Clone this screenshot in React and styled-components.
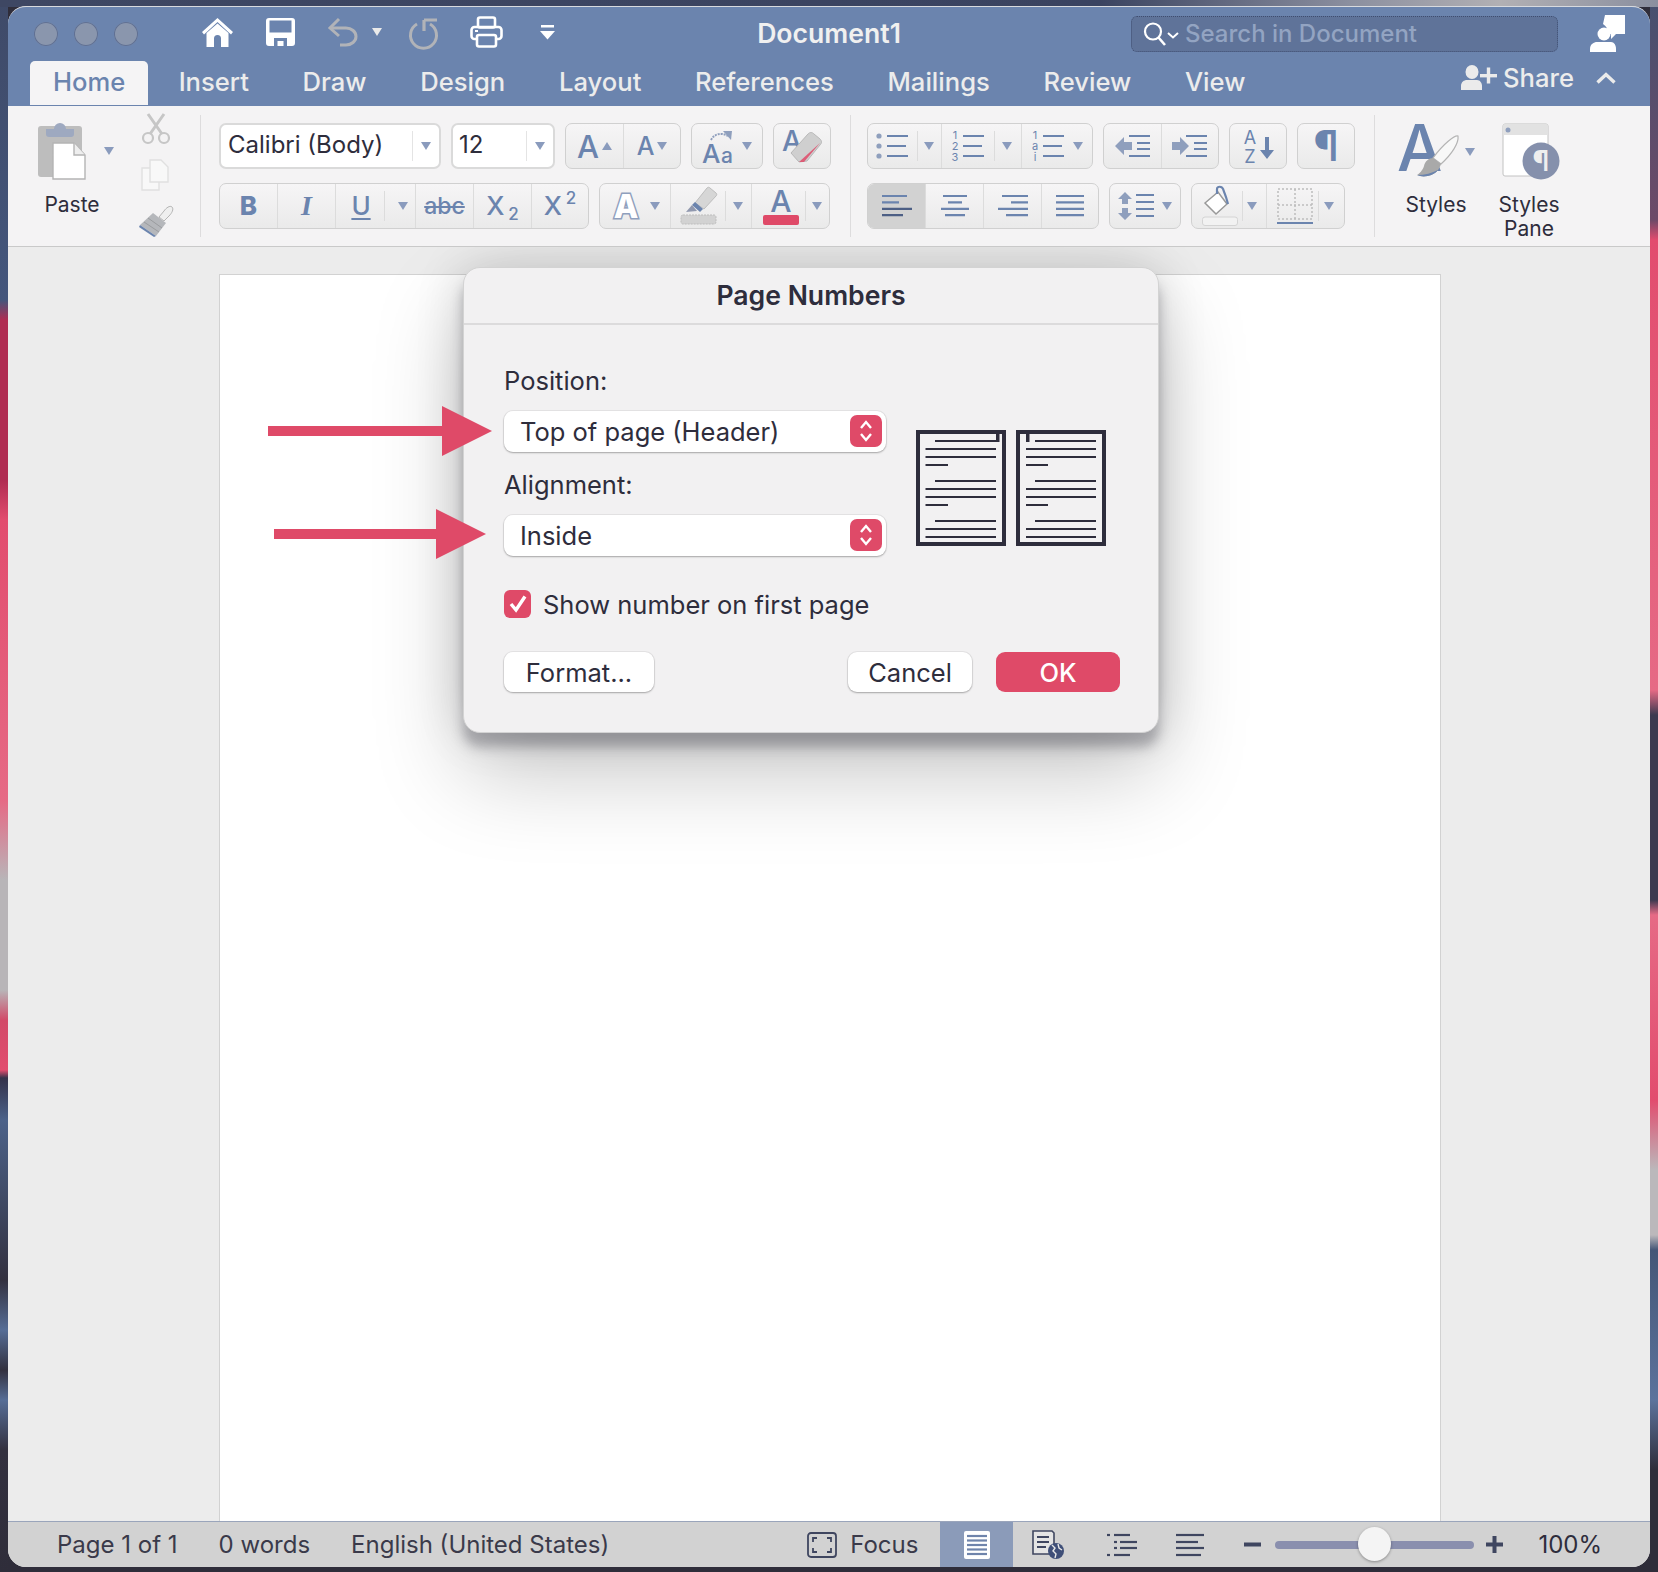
import React from 'react';
import styled, { createGlobalStyle } from 'styled-components';

const BLUE = '#6b84ae';
const RED = '#df4a68';
const INK = '#2e2d3c';

const Global = createGlobalStyle`
  html, body { margin: 0; padding: 0; }
  svg { overflow: visible; }
  body {
    width: 1658px; height: 1572px; overflow: hidden;
    font-family: Inter, "Noto Sans", "Liberation Sans", sans-serif;
    background-color: #2f2d3a;
    background-repeat: no-repeat;
    background-image:
      linear-gradient(to right, #3e4763 0, #3a4360 1100px, #8b8f9f 1350px, #b2b0b4 1500px, #8a8f9f 100%),
      linear-gradient(to bottom, #3f4a68 0, #44567c 300px, #b02c52 320px, #b02c52 480px, #e24c6e 520px, #e66a85 800px, #b8b5b8 880px, #b8b5b8 990px, #d24a68 1020px, #e24c6e 1070px, #34324a 1078px, #4c6289 1120px, #33313f 1280px, #566d96 1330px, #33313f 1370px, #566d96 1400px, #33313f 1450px, #2f2d3a 100%),
      linear-gradient(to bottom, #46506f 0, #6d4a68 220px, #e24c6e 240px, #e66a85 690px, #3c3a50 715px, #3c3a50 900px, #e66a85 915px, #e24c6e 1100px, #bbb8bb 1170px, #bbb8bb 1235px, #445677 1250px, #5c739c 1400px, #2f2d3a 1470px, #2f2d3a 100%);
    background-size: 100% 7px, 8px 100%, 8px 100%;
    background-position: 0 0, 0 0, 100% 0;
  }
`;

const Stage = styled.div`
  box-sizing: border-box;
  width: 1658px; height: 1572px;
  padding: 6px 8px 5px;
`;
const Win = styled.div`
  display: flex; flex-direction: column;
  height: 100%;
  border-radius: 18px;
  overflow: hidden;
  background: #ececec;
  border-top: 1px solid #d8dade;
  box-sizing: border-box;
`;

/* ---------- title ---------- */
const Head = styled.header`
  background: ${BLUE};
  height: 99px;
  flex: none;
`;
const TopRow = styled.div`
  display: grid;
  grid-template-columns: 1fr auto 1fr;
  align-items: center;
  height: 53px;
`;
const TopLeft = styled.div`
  display: flex; align-items: center;
  padding-left: 26px;
`;
const Lights = styled.div`
  display: flex; gap: 16px;
  margin-right: 64px;
`;
const Light = styled.span`
  width: 24px; height: 24px; border-radius: 50%;
  background: #8a96ad;
  box-shadow: inset 0 0 0 1px #5f7094;
`;
const QatBtn = styled.span`
  display: inline-flex; align-items: center; justify-content: center;
  margin-right: ${p => p.$mr ?? 0}px;
  margin-top: -3px;
`;
const DocTitle = styled.div`
  font-size: 26.6px; font-weight: 600;
  color: #f0f0f0;
  margin-top: -2px;
`;
const TopRight = styled.div`
  display: flex; align-items: center; justify-content: flex-end;
  gap: 32px;
  padding-right: 25px;
`;
const Search = styled.div`
  display: flex; align-items: center;
  box-sizing: border-box;
  width: 427px; height: 36px;
  padding-left: 11px;
  background: #5f7399;
  border: 1px dotted #3f4d70;
  border-radius: 6px;
`;
const SearchText = styled.span`
  margin-left: 6px;
  font-size: 24px; font-weight: 500;
  color: #93a4c2;
`;
const TabRow = styled.nav`
  display: flex; align-items: flex-end;
  height: 45px;
  padding: 0 34px 0 22px;
`;
const Tab = styled.div`
  height: 44px; display: flex; align-items: center;
  padding: 0 ${p => (p.$active ? 23 : 26.85)}px 4px;
  margin-right: ${p => (p.$active ? 3.5 : 0)}px;
  box-sizing: border-box;
  font-size: 25.6px; font-weight: 500;
  color: ${p => (p.$active ? BLUE : '#ececec')};
  background: ${p => (p.$active ? '#f5f4f5' : 'transparent')};
  border-radius: 5px 5px 0 0;
`;
const ShareBox = styled.div`
  margin-left: auto;
  align-self: center;
  display: flex; align-items: center;
  color: #ececec;
  font-size: 25.6px; font-weight: 500;
  margin-top: -10px;
`;
const ShareText = styled.span`
  margin: 0 22px 0 6px;
`;

/* ---------- ribbon ---------- */
const Ribbon = styled.section`
  display: flex; flex: none;
  height: 141px;
  box-sizing: border-box;
  background: #f4f3f4;
  border-bottom: 1px solid #c9c9c9;
`;
const Sep = styled.div`
  flex: none;
  width: 1px; height: 122px;
  margin: 9px ${p => p.$r}px 0 ${p => p.$l}px;
  background: #dddcdd;
`;
const ClipGroup = styled.div`
  display: flex;
  width: 192px; flex: none;
`;
const PasteCol = styled.div`
  display: flex; flex-direction: column;
  width: 130px;
  padding: 14px 0 0 30px;
  box-sizing: border-box;
`;
const PasteTop = styled.div`
  display: flex; align-items: center; gap: 18px;
  height: 62px;
`;
const RibbonLabel = styled.div`
  font-size: 21px;
  line-height: 24px;
  color: ${INK};
  text-align: center;
`;
const PasteLabel = styled(RibbonLabel)`
  width: 68px;
  margin-top: 11px;
`;
const MiniCol = styled.div`
  display: flex; flex-direction: column; gap: 14px;
  padding: 7px 0 0 3px;
`;
const RowsBlock = styled.div`
  display: flex; flex-direction: column; gap: 14px;
  padding-top: 17px;
  width: ${p => p.$w}px; flex: none;
`;
const Row = styled.div`
  display: flex; gap: 10px; height: 46px;
`;
const Field = styled.div`
  display: flex; align-items: center;
  box-sizing: border-box;
  width: ${p => p.$w}px;
  padding-left: ${p => p.$pl ?? 7}px;
  background: #fff;
  border: 2px solid #dadada;
  border-radius: 7px;
  font-size: 24px;
  color: ${INK};
`;
const FieldText = styled.span` flex: 1; margin-top: -4px; `;
const FieldDrop = styled.span`
  display: flex; align-items: center; justify-content: center;
  width: 26px; height: 30px;
  border-left: 1px solid #e4e4e4;
`;
const Tools = styled.div`
  display: flex;
  box-sizing: border-box;
  border: 1.5px solid #d0d0d0;
  border-radius: 7px;
  background: linear-gradient(to bottom, #f6f5f6, #eaeaea);
`;
const Cell = styled.div`
  display: flex; align-items: center; justify-content: center;
  gap: ${p => p.$gap ?? 6}px;
  width: ${p => p.$w}px;
  padding-left: ${p => p.$pl ?? 0}px;
  box-sizing: border-box;
  flex: none;
  border-right: 1.5px solid #dcdcdc;
  background: ${p => (p.$on ? '#d2d2d2' : 'transparent')};
  border-radius: ${p => (p.$on ? '6px 0 0 6px' : '0')};
  &:last-child { border-right: 0; }
`;
const Caret = styled.span`
  display: inline-block; width: 0; height: 0; flex: none;
  border-left: 5px solid transparent;
  border-right: 5px solid transparent;
  border-top: 8px solid ${p => p.$c || '#8a9bbd'};
`;
const CaretUp = styled(Caret)`
  border-top: 0;
  border-bottom: 8px solid #8a9bbd;
`;
const Split = styled.span`
  width: 1px; height: 30px; background: #dcdcdc; flex: none;
`;
const Glyph = styled.span`
  font-size: ${p => p.$s || 26}px;
  font-weight: ${p => p.$w || 500};
  font-style: ${p => (p.$i ? 'italic' : 'normal')};
  font-family: ${p => (p.$serif ? '"Liberation Serif", serif' : 'inherit')};
  color: ${BLUE};
  line-height: 1;
  text-decoration: ${p => p.$d || 'none'};
  text-decoration-thickness: 2px;
  text-underline-offset: 3px;
`;
const Sub = styled.span`
  font-size: 17px; font-weight: 500; color: ${BLUE};
  position: relative; top: ${p => p.$t}px;
  margin-left: 4px;
`;
const StyleCols = styled.div`
  display: flex; flex: none;
  padding: 15px 0 0 23px;
  gap: 17px;
`;
const StyleCol = styled.div`
  display: flex; flex-direction: column; align-items: center;
  width: ${p => p.$w}px;
`;
const StyleIcon = styled.div`
  display: flex; align-items: center; gap: 5px;
  height: 62px; margin-bottom: 10px;
  align-self: ${p => p.$start ? 'flex-start' : 'center'};
`;

/* ---------- content ---------- */
const Content = styled.main`
  position: relative;
  flex: 1; min-height: 0;
  overflow: hidden;
  background: #ececec;
  padding: 27px 0 0 211px;
  box-sizing: border-box;
`;
const Page = styled.div`
  box-sizing: border-box;
  width: 1222px; height: 100%;
  background: #fff;
  border: 1px solid #d2d2d2;
  border-bottom: 0;
`;
const Dialog = styled.div`
  position: absolute;
  left: 455px; top: 20px;
  width: 696px; height: 466px;
  box-sizing: border-box;
  background: #f2f1f2;
  border: 1px solid #d3d3d3;
  border-radius: 17px;
  box-shadow: 0 14px 12px rgba(60,60,70,.34), 0 40px 90px rgba(0,0,0,.22), 0 0 50px rgba(0,0,0,.14);
  color: ${INK};
`;
const DialogHead = styled.div`
  display: flex; align-items: center; justify-content: center;
  height: 57px;
  border-bottom: 2px solid #dcdbdc;
  box-sizing: border-box;
  font-size: 26.6px; font-weight: 600;
  padding-bottom: 2px;
`;
const DialogBody = styled.div`
  padding: 40px 38px 0 40px;
`;
const FormGrid = styled.div`
  display: grid;
  grid-template-columns: 382px auto;
  column-gap: 30px;
`;
const FieldLabel = styled.div`
  font-size: 25.5px; line-height: 32px;
  margin-bottom: 14px;
`;
const SelectBox = styled.div`
  display: flex; align-items: center; justify-content: space-between;
  box-sizing: border-box;
  height: 41px;
  padding: 0 4px 1px 16px;
  background: #fff;
  border-radius: 9px;
  box-shadow: 0 1px 2px rgba(0,0,0,.28), 0 0 0 1px rgba(0,0,0,.05);
  font-size: 25.5px;
  margin-bottom: ${p => p.$mb ?? 0}px;
`;
const Stepper = styled.span`
  display: flex; align-items: center; justify-content: center;
  width: 32px; height: 32px;
  border-radius: 7px;
  background: ${RED};
`;
const Preview = styled.div`
  display: flex; gap: 10px;
  padding-top: 65px;
`;
const CheckRow = styled.label`
  display: flex; align-items: center; gap: 12px;
  margin-top: 34px;
  height: 28px;
  font-size: 25.5px;
`;
const CheckMark = styled.span`
  display: flex; align-items: center; justify-content: center;
  width: 27px; height: 28px;
  border-radius: 6px;
  background: ${RED};
`;
const Footer = styled.div`
  display: flex; align-items: center;
  margin-top: 34px;
`;
const DlgButton = styled.button`
  height: 40px; width: ${p => p.$w}px;
  margin-left: ${p => p.$ml || 0};
  font: inherit;
  font-size: 25.5px;
  font-weight: ${p => (p.$primary ? 500 : 400)};
  color: ${p => (p.$primary ? '#fff' : INK)};
  background: ${p => (p.$primary ? RED : '#fff')};
  border: 0; border-radius: 9px;
  padding: 0;
  box-shadow: ${p => (p.$primary ? 'none' : '0 1px 2px rgba(0,0,0,.28), 0 0 0 1px rgba(0,0,0,.05)')};
`;
const ArrowMark = styled.svg`
  position: absolute;
  left: ${p => p.$x}px; top: ${p => p.$y}px;
`;

/* ---------- status ---------- */
const Status = styled.footer`
  display: flex; align-items: center; flex: none;
  height: 46px;
  box-sizing: border-box;
  padding-left: 49px;
  background: #d2d2d2;
  border-top: 1.5px solid #9aa5bb;
  font-size: 24px;
  color: #3a3a4a;
`;
const StatusText = styled.span`
  margin-right: ${p => p.$mr ?? 41}px;
`;
const ViewCell = styled.div`
  display: flex; align-items: center;
  justify-content: ${p => (p.$end ? 'flex-end' : 'center')};
  align-self: stretch;
  width: ${p => p.$w}px; flex: none;
  background: ${p => (p.$on ? '#8b9bb9' : 'transparent')};
`;
const FocusBox = styled.div`
  display: flex; align-items: center; gap: 13px;
  margin-left: auto;
  margin-right: 22px;
`;
const Zoomer = styled.div`
  position: relative;
  width: 199px; height: 8px;
  border-radius: 4px;
  background: #8a8fae;
  margin: 0 12px 0 14px;
`;
const Thumb = styled.span`
  position: absolute;
  left: 83px; top: -14px;
  width: 33px; height: 34px;
  border-radius: 50%;
  background: #f4f4f4;
  box-shadow: 0 1px 3px rgba(0,0,0,.35);
`;
const Pct = styled.span`
  margin: 0 48px 0 35px;
  color: ${INK};
`;

/* ---------- icons ---------- */
const L = ({ y, a, b, c = BLUE, w = 2.2 }) => <line x1={a} x2={b} y1={y} y2={y} stroke={c} strokeWidth={w} />;

const HomeIcon = () => (
  <svg width="31" height="31" viewBox="0 0 31 31">
    <path d="M15.5 1 L31 15 l-2 2.4 L15.5 5 2 17.4 0 15z" fill="#fff" />
    <path d="M4.5 16 15.5 6.5 26.5 16v14h-7.5v-8.5a3.5 3.5 0 0 0-7 0V30H4.500z" fill="#fff" />
  </svg>
);
const SaveIcon = () => (
  <svg width="29" height="28" viewBox="0 0 29 28">
    <path fillRule="evenodd" fill="#fff" d="M3 0h23a3 3 0 0 1 3 3v22a3 3 0 0 1-3 3H3a3 3 0 0 1-3-3V3a3 3 0 0 1 3-3zM3.500 2.500v12h22v-12z" />
    <path d="M8 28v-8h13v8h-3.500v-5h-6v5z" fill="#6b84ae" />
  </svg>
);
const UndoIcon = () => (
  <svg width="31" height="30" viewBox="0 0 31 30" fill="none" stroke="#b1b3b8" strokeWidth="3">
    <path d="M11 2 2 11l9 8" />
    <path d="M3 11h15a10 8.500 0 0 1 0 17h-6" />
  </svg>
);
const RedoIcon = () => (
  <svg width="31" height="31" viewBox="0 0 31 31" fill="none" stroke="#b1b3b8" strokeWidth="3.2">
    <path d="M16 3h13M16 3v11" />
    <path d="M9 7a13 13 0 1 0 13 0" strokeWidth="3" />
  </svg>
);
const PrintIcon = () => (
  <svg width="33" height="32" viewBox="0 0 33 32" fill="none" stroke="#fff" strokeWidth="2.6">
    <rect x="8" y="1.500" width="17" height="10" rx="2" />
    <path d="M7 23H4.500A3 3 0 0 1 1.500 20v-6a3 3 0 0 1 3-3h24a3 3 0 0 1 3 3v6a3 3 0 0 1-3 3H26" />
    <rect x="7" y="19" width="19" height="11.500" rx="2" />
    <rect x="5" y="14" width="3" height="2" fill="#fff" stroke="none" />
  </svg>
);
const CustomizeIcon = () => (
  <svg width="15" height="15" viewBox="0 0 15 15" fill="#fff">
    <rect x="1" y="0" width="13" height="2.500" />
    <path d="M0 6h15l-7.500 8.500z" />
  </svg>
);
const SearchIcon = () => (
  <svg width="36" height="24" viewBox="0 0 36 24" fill="none" stroke="#fff">
    <circle cx="10" cy="9.500" r="8" strokeWidth="2.200" />
    <path d="M15.500 15.500 22 23" strokeWidth="2.600" />
    <path d="M25 11l5 4.500 5-4.500" strokeWidth="2" />
  </svg>
);
const PersonChat = () => (
  <svg width="35" height="37" viewBox="0 0 35 37" fill="#fff">
    <path d="M15 0h20v19H26l-5 5v-5h-3A11 11 0 0 0 13 9z" />
    <circle cx="14" cy="19" r="6.500" />
    <path d="M0 37v-3c0-5 4-7 7-7h14c3 0 5 3 5 7v3z" />
  </svg>
);
const SharePerson = () => (
  <svg width="36" height="25" viewBox="0 0 36 25" fill="#ebebeb">
    <ellipse cx="11" cy="7" rx="6.500" ry="7" />
    <path d="M0 25v-4c0-4 3-6 6-6h10c3 0 5 3 5 6v4z" />
    <rect x="19" y="9" width="17" height="3.400" />
    <rect x="25.800" y="2.500" width="3.400" height="16" />
  </svg>
);
const CollapseIcon = () => (
  <svg width="20" height="12" viewBox="0 0 20 12" fill="none" stroke="#ebebeb" strokeWidth="3.400">
    <path d="M1.500 10.500 10 2.500l8.500 8" />
  </svg>
);
const PasteIcon = () => (
  <svg width="48" height="60" viewBox="0 0 48 60">
    <rect x="0" y="5" width="44" height="51" rx="3" fill="#bdbdbd" />
    <path d="M8 8h8a6 6 0 0 1 12 0h8v5a3 3 0 0 1-3 3H11a3 3 0 0 1-3-3z" fill="#9ea9c0" />
    <path d="M15 22h21l11 12v24H15z" fill="#fff" stroke="#b4b4b4" strokeWidth="1.400" />
    <path d="M36 22v12h11" fill="#eee" stroke="#b4b4b4" strokeWidth="1.400" />
  </svg>
);
const ScissorsIcon = () => (
  <svg width="30" height="32" viewBox="0 0 30 32" fill="none" stroke="#c6c6c6" strokeWidth="2.200">
    <circle cx="7" cy="25" r="5" />
    <circle cx="23" cy="25" r="5" />
    <path d="M9 21 23 1M21 21 7 1" strokeWidth="3" />
  </svg>
);
const CopyIcon = () => (
  <svg width="28" height="32" viewBox="0 0 28 32" fill="#f8f8f8" stroke="#e0e0e0" strokeWidth="1.400">
    <path d="M1 9h17v22H1z" />
    <path d="M9 1h11l7 7v15H9z" />
  </svg>
);
const BrushIcon = () => (
  <svg width="34" height="32" viewBox="2 0 34 32">
    <path d="M20 12 25 6c2-3 6-6 8-4s0 6-3 9l-5 5z" fill="#efefef" stroke="#b5b5b5" />
    <path d="M14 8 27 18 17 31 1 20z" fill="#b5b7bb" />
    <path d="M1 20 17 31 15 32 0 22z" fill={BLUE} />
    <path d="M5 17 20 27M9 13 23 23" stroke="#9a9c9f" strokeWidth="1" />
  </svg>
);
const TextEffect = () => (
  <svg width="32" height="32" viewBox="0 0 32 32">
    <text x="16" y="28" textAnchor="middle" fontFamily="Inter" fontWeight="800" fontSize="32" fill="#fff" stroke="#8f9fbd" strokeWidth="3" paintOrder="stroke">A</text>
  </svg>
);
const Highlighter = () => (
  <svg width="38" height="40" viewBox="0 0 38 40">
    <path d="M15 17 27 2c1-1 2-1 3 0l6 5c1 1 1 2 0 3L24 23z" fill="#d6d6d6" stroke="#bdbdbd" />
    <path d="M12 19l3-3 8 7-3 3z" fill={BLUE} />
    <path d="M6 26l6-7 5 6z" fill="#9098ae" />
    <rect x="1" y="29" width="35" height="9" rx="2" fill="#d2d2d2" stroke="#bdbdbd" strokeDasharray="2 1" />
  </svg>
);
const FontColor = () => (
  <svg width="36" height="38" viewBox="0 0 36 38">
    <text x="18" y="25" textAnchor="middle" fontFamily="Inter" fontWeight="500" fontSize="30" fill={BLUE}>A</text>
    <rect y="28" width="36" height="10" rx="2" fill={RED} />
  </svg>
);
const ChangeCase = () => (
  <svg width="34" height="36" viewBox="0 0 34 36">
    <text x="0" y="35" fontFamily="Inter" fontWeight="500" fontSize="26" fill={BLUE}>A</text>
    <text x="19" y="35" fontFamily="Inter" fontWeight="500" fontSize="21" fill={BLUE}>a</text>
    <path d="M9 12C12 6 19 4 26 8" fill="none" stroke="#8f9fbd" strokeWidth="2" strokeDasharray="2 1" />
    <path d="M21 3l9 0-1 9z" fill="#8f9fbd" />
  </svg>
);
const ClearFormat = () => (
  <svg width="40" height="36" viewBox="0 0 40 36">
    <text x="0" y="23" fontFamily="Inter" fontWeight="500" fontSize="28" fill={BLUE}>A</text>
    <path d="M9 25 26 6c2-2 4-2 6 0l6 5c2 2 2 4 0 6L25 33l-8 1z" fill="#cfcfcf" stroke="#b8b8b8" />
    <path d="M38 15 22 34l-5 0z" fill={RED} opacity="0.85" />
  </svg>
);
const AlignIcon = ({ rows }) => (
  <svg width="32" height="26" viewBox="0 0 32 26">
    {rows.map((r, i) => <L key={i} y={3 + i * 6.400} a={r[0]} b={r[1]} c={r[2] || BLUE} />)}
  </svg>
);
const ListLines = ({ marks, x = 12 }) => (
  <svg width="36" height="30" viewBox="0 0 36 30">
    {marks.map((m, i) => {
      const y = 4 + i * 11;
      return m === '•'
        ? <circle key={i} cx="4" cy={y + 1 - i} r="2.600" fill="#8f9fbd" />
        : <text key={i} x="4" y={y + 4} textAnchor="middle" fontFamily="Inter" fontSize="11" fill={BLUE}>{m}</text>;
    })}
    <L y={5} a={x} b={33} /><L y={15} a={x} b={31} /><L y={25} a={x} b={33} />
  </svg>
);
const IndentIcon = ({ flip }) => (
  <svg width="36" height="26" viewBox="0 0 36 26">
    <path d={flip ? 'M0 9h8V4l9 9-9 9v-5H0z' : 'M0 13l9-9v5h8v8H9v5z'} fill="#8f9fbd" />
    <L y={3} a={14} b={35} /><L y={10} a={22} b={35} /><L y={16} a={22} b={35} /><L y={23} a={14} b={35} />
  </svg>
);
const SortIcon = () => (
  <svg width="32" height="36" viewBox="0 0 32 36">
    <text x="8" y="16" textAnchor="middle" fontFamily="Inter" fontSize="18" fill={BLUE}>A</text>
    <text x="8" y="35" textAnchor="middle" fontFamily="Inter" fontSize="18" fill={BLUE}>Z</text>
    <path d="M23 9h4v13h5l-7 9-7-9h5z" fill={BLUE} />
  </svg>
);
const SpacingIcon = () => (
  <svg width="38" height="28" viewBox="0 0 38 28">
    <path d="M7 0l7 7h-4v5H4V7H0zM7 28l7-7h-4v-5H4v5H0z" fill="#8f9fbd" />
    <L y={3} a={18} b={36} /><L y={10} a={18} b={36} /><L y={17} a={18} b={36} /><L y={24} a={18} b={36} />
  </svg>
);
const Bucket = () => (
  <svg width="36" height="40" viewBox="0 0 36 40">
    <path d="M3 17 16 6l9 12-11 10z" fill="#fff" stroke="#999" strokeWidth="1.500" />
    <path d="M15 8V3c0-3 5-3 6 0l3 8 2 7" fill="none" stroke={BLUE} strokeWidth="2.200" />
    <rect x="0.500" y="31" width="35" height="8.500" rx="2.500" fill="#f2f2f2" stroke="#d4d4d4" />
  </svg>
);
const Borders = () => (
  <svg width="36" height="36" viewBox="0 0 36 36" fill="none" stroke="#bdbdbd" strokeWidth="1.500" strokeDasharray="2 2">
    <path d="M1 1h34v30H1zM18 1v30M1 17h34" />
    <path d="M0 35h36" stroke={BLUE} strokeWidth="2" strokeDasharray="none" />
  </svg>
);
const StylesIcon = () => (
  <svg width="62" height="60" viewBox="0 0 62 60">
    <text x="-1" y="49" fontFamily="Inter" fontWeight="500" fontSize="64" fill={BLUE}>A</text>
    <path d="M60 14C57 13 46 21 35 36l8 6C54 32 61 21 60 14z" fill="#f8f8f8" stroke="#b4b4b4" strokeWidth="1.200" />
    <path d="M35 36c-4 0-8 3-9 8-1 4-5 8-7 9 6 3 17 1 21-5 2-3 3-6 3-6z" fill="#a9a9a9" />
    <path d="M19 53c6 3 17 1 21-5-6 3-13 5-21 5z" fill={BLUE} />
  </svg>
);
const PaneIcon = () => (
  <svg width="62" height="66" viewBox="-4 -4 62 66">
    <rect x="1" y="1" width="45" height="52" rx="2" fill="#fff" stroke="#c2c2c2" />
    <path d="M1 3a2 2 0 0 1 2-2h41a2 2 0 0 1 2 2v9H1z" fill="#e2e2e2" />
    <circle cx="6" cy="7" r="2.500" fill="#8f9fbd" />
    <circle cx="39" cy="38" r="18.500" fill="#8590ac" />
    <text x="39" y="48" textAnchor="middle" fontFamily="Inter" fontWeight="600" fontSize="28" fill="#eee">¶</text>
  </svg>
);
const Chevrons = ({ color = '#fff' }) => (
  <svg width="14" height="24" viewBox="0 0 14 24" fill="none" stroke={color} strokeWidth="2.400">
    <path d="M2 9l5-6 5 6M2 15l5 6 5-6" />
  </svg>
);
const Check = () => (
  <svg width="20" height="20" viewBox="0 0 20 20" fill="none" stroke="#fff" strokeWidth="3.400">
    <path d="M3 10l5 6L17 2.500" />
  </svg>
);
const PageThumb = ({ right }) => {
  const lx = right ? 10 : 9.500;
  const rows = [[11, 1], [19, 0], [27, 0], [35, 2], [51, 1], [59, 0], [67, 0], [75, 2], [91, 1], [99, 0], [107, 0]];
  return (
    <svg width="90" height="116" viewBox="0 0 90 116">
      <rect x="2" y="2" width="86" height="112" fill="none" stroke={INK} strokeWidth="4" />
      <rect x={right ? 10 : 80} y="4" width="3.500" height="8" fill={INK} />
      {rows.map(([y, k]) => (
        <L key={y} y={y} c={INK} w={2} a={k === 1 ? 19 : lx} b={k === 2 ? 32 : 80} />
      ))}
    </svg>
  );
};
const Arrow = ({ x, y, w }) => (
  <ArrowMark $x={x} $y={y} width={w} height="50" viewBox={`0 0 ${w} 50`}>
    <path d={`M0 20H${w - 50}V0L${w} 25 ${w - 50} 50V30H0z`} fill={RED} />
  </ArrowMark>
);
const FocusIcon = () => (
  <svg width="30" height="26" viewBox="0 0 30 26" fill="none" stroke="#3f4660" strokeWidth="1.800">
    <rect x="1" y="1" width="28" height="24" rx="3" />
    <path d="M6 10V6h4M20 6h4v4M24 16v4h-4M10 20H6v-4" />
  </svg>
);
const PrintLayout = () => (
  <svg width="28" height="30" viewBox="0 0 28 30">
    <rect x="1" y="1" width="26" height="28" rx="2" fill="#fff" />
    {[6, 10.500, 15, 19.500, 24].map(y => <L key={y} y={y} a={4} b={24} c="#6f84ab" w={2.200} />)}
  </svg>
);
const WebLayout = () => (
  <svg width="32" height="30" viewBox="0 0 32 30">
    <path d="M1 1h19l2 2v13a8 8 0 0 0-3 8H1z" fill="#e4e4e4" stroke="#3f4660" strokeWidth="1.600" />
    <L y={7} a={5} b={17} c="#3f4660" w={2} /><L y={12} a={5} b={17} c="#3f4660" w={2} /><L y={17} a={5} b={14} c="#3f4660" w={2} />
    <circle cx="24" cy="21" r="8" fill="#3f4f78" />
    <path d="M20 15l3 3-2 3 3 3-1 4M26 14l1 4 3 2" fill="none" stroke="#e8e8e8" strokeWidth="1.400" />
  </svg>
);
const OutlineView = () => (
  <svg width="32" height="24" viewBox="0 0 32 24">
    <L y={2} a={1} b={4} c="#3f4660" /><L y={2} a={8} b={24} c="#3f4660" />
    <L y={9} a={8} b={11} c="#3f4660" /><L y={9} a={14} b={31} c="#3f4660" />
    <L y={15} a={8} b={11} c="#3f4660" /><L y={15} a={14} b={31} c="#3f4660" />
    <L y={22} a={1} b={4} c="#3f4660" /><L y={22} a={8} b={24} c="#3f4660" />
  </svg>
);
const DraftView = () => (
  <svg width="28" height="24" viewBox="0 0 28 24">
    <L y={2} a={0} b={28} c="#3f4660" /><L y={9} a={0} b={22} c="#3f4660" />
    <L y={15} a={0} b={28} c="#3f4660" /><L y={22} a={0} b={25} c="#3f4660" />
  </svg>
);
const ZoomSign = ({ plus }) => (
  <svg width="17" height="17" viewBox="0 0 17 17" fill="#3f4660">
    <rect x={0} y="6.500" width="17" height="4" />
    {plus && <rect x="6.500" y="0" width="4" height="17" />}
  </svg>
);

const tabs = ['Home', 'Insert', 'Draw', 'Design', 'Layout', 'References', 'Mailings', 'Review', 'View'];
const AL2 = '#4d5f85';

export default function App() {
  return (
    <>
      <Global />
      <Stage>
        <Win>
          <Head>
            <TopRow>
              <TopLeft>
                <Lights><Light /><Light /><Light /></Lights>
                <QatBtn $mr={33}><HomeIcon /></QatBtn>
                <QatBtn $mr={33}><SaveIcon /></QatBtn>
                <QatBtn $mr={13}><UndoIcon /></QatBtn>
                <QatBtn $mr={26}><Caret $c="#eaeaea" /></QatBtn>
                <QatBtn $mr={31}><RedoIcon /></QatBtn>
                <QatBtn $mr={37}><PrintIcon /></QatBtn>
                <QatBtn><CustomizeIcon /></QatBtn>
              </TopLeft>
              <DocTitle>Document1</DocTitle>
              <TopRight>
                <Search><SearchIcon /><SearchText>Search in Document</SearchText></Search>
                <PersonChat />
              </TopRight>
            </TopRow>
            <TabRow>
              {tabs.map((t, i) => <Tab key={t} $active={i === 0}>{t}</Tab>)}
              <ShareBox><SharePerson /><ShareText>Share</ShareText><CollapseIcon /></ShareBox>
            </TabRow>
          </Head>

          <Ribbon>
            <ClipGroup>
              <PasteCol>
                <PasteTop><PasteIcon /><Caret /></PasteTop>
                <PasteLabel>Paste</PasteLabel>
              </PasteCol>
              <MiniCol><ScissorsIcon /><CopyIcon /><BrushIcon /></MiniCol>
            </ClipGroup>
            <Sep $l={0} $r={18} />
            <RowsBlock $w={612}>
              <Row>
                <Field $w={222}><FieldText>Calibri (Body)</FieldText><FieldDrop><Caret /></FieldDrop></Field>
                <Field $w={104} $pl={6}><FieldText>12</FieldText><FieldDrop><Caret /></FieldDrop></Field>
                <Tools>
                  <Cell $w={58} $gap={3}><Glyph $s={31}>A</Glyph><CaretUp /></Cell>
                  <Cell $w={56} $gap={3}><Glyph $s={25}>A</Glyph><Caret /></Cell>
                </Tools>
                <Tools><Cell $w={70}><ChangeCase /><Caret /></Cell></Tools>
                <Tools><Cell $w={56}><ClearFormat /></Cell></Tools>
              </Row>
              <Row>
                <Tools>
                  <Cell $w={58}><Glyph $w={800}>B</Glyph></Cell>
                  <Cell $w={58}><Glyph $serif $i $w={700} $s={28}>I</Glyph></Cell>
                  <Cell $w={80} $gap={13} $pl={8}><Glyph $d="underline">U</Glyph><Split /><Caret /></Cell>
                  <Cell $w={58}><Glyph $s={23} $d="line-through">abc</Glyph></Cell>
                  <Cell $w={58} $gap={0}><Glyph>X</Glyph><Sub $t={8}>2</Sub></Cell>
                  <Cell $w={56} $gap={0}><Glyph>X</Glyph><Sub $t={-8}>2</Sub></Cell>
                </Tools>
                <Tools>
                  <Cell $w={71} $gap={8}><TextEffect /><Caret /></Cell>
                  <Cell $w={81} $gap={7}><Highlighter /><Split /><Caret /></Cell>
                  <Cell $w={77} $gap={6} $pl={3}><FontColor /><Split /><Caret /></Cell>
                </Tools>
              </Row>
            </RowsBlock>
            <Sep $l={19} $r={16} />
            <RowsBlock $w={489}>
              <Row>
                <Tools>
                  <Cell $w={74} $gap={6}><ListLines marks={['•', '•', '•']} /><Split /><Caret /></Cell>
                  <Cell $w={80} $gap={7}><ListLines marks={['1', '2', '3']} /><Split /><Caret /></Cell>
                  <Cell $w={70} $gap={6}><ListLines marks={['1', 'a', 'i']} /><Caret /></Cell>
                </Tools>
                <Tools>
                  <Cell $w={58}><IndentIcon /></Cell>
                  <Cell $w={56}><IndentIcon flip /></Cell>
                </Tools>
                <Tools><Cell $w={56}><SortIcon /></Cell></Tools>
                <Tools><Cell $w={56}><Glyph $s={42} $w={600}>¶</Glyph></Cell></Tools>
              </Row>
              <Row>
                <Tools>
                  <Cell $w={58} $on><AlignIcon rows={[[1, 26], [1, 18], [1, 31, AL2], [1, 22, AL2]]} /></Cell>
                  <Cell $w={58}><AlignIcon rows={[[4, 28], [9, 23], [2, 30], [6, 26]]} /></Cell>
                  <Cell $w={58}><AlignIcon rows={[[5, 31], [14, 31], [1, 31], [9, 31]]} /></Cell>
                  <Cell $w={56}><AlignIcon rows={[[2, 30], [2, 30], [2, 30], [2, 30]]} /></Cell>
                </Tools>
                <Tools><Cell $w={70}><SpacingIcon /><Caret /></Cell></Tools>
                <Tools>
                  <Cell $w={75} $gap={4}><Bucket /><Split /><Caret /></Cell>
                  <Cell $w={77} $gap={5}><Borders /><Split /><Caret /></Cell>
                </Tools>
              </Row>
            </RowsBlock>
            <Sep $l={18} $r={0} />
            <StyleCols>
              <StyleCol $w={76}>
                <StyleIcon $start><StylesIcon /><Caret /></StyleIcon>
                <RibbonLabel>Styles</RibbonLabel>
              </StyleCol>
              <StyleCol $w={76}>
                <StyleIcon><PaneIcon /></StyleIcon>
                <RibbonLabel>Styles<br />Pane</RibbonLabel>
              </StyleCol>
            </StyleCols>
          </Ribbon>

          <Content>
            <Page />
            <Dialog>
              <DialogHead>Page Numbers</DialogHead>
              <DialogBody>
                <FormGrid>
                  <div>
                    <FieldLabel>Position:</FieldLabel>
                    <SelectBox $mb={17}>Top of page (Header)<Stepper><Chevrons /></Stepper></SelectBox>
                    <FieldLabel>Alignment:</FieldLabel>
                    <SelectBox>Inside<Stepper><Chevrons /></Stepper></SelectBox>
                  </div>
                  <Preview><PageThumb /><PageThumb right /></Preview>
                </FormGrid>
                <CheckRow><CheckMark><Check /></CheckMark>Show number on first page</CheckRow>
                <Footer>
                  <DlgButton $w={150}>Format...</DlgButton>
                  <DlgButton $w={124} $ml="auto">Cancel</DlgButton>
                  <DlgButton $w={124} $ml="24px" $primary>OK</DlgButton>
                </Footer>
              </DialogBody>
            </Dialog>
            <Arrow x={260} y={159} w={224} />
            <Arrow x={266} y={262} w={212} />
          </Content>

          <Status>
            <StatusText>Page 1 of 1</StatusText>
            <StatusText>0 words</StatusText>
            <StatusText $mr={0}>English (United States)</StatusText>
            <FocusBox><FocusIcon /><span>Focus</span></FocusBox>
            <ViewCell $w={73} $on><PrintLayout /></ViewCell>
            <ViewCell $w={70}><WebLayout /></ViewCell>
            <ViewCell $w={78}><OutlineView /></ViewCell>
            <ViewCell $w={58}><DraftView /></ViewCell>
            <ViewCell $w={42} $end><ZoomSign /></ViewCell>
            <Zoomer><Thumb /></Zoomer>
            <ZoomSign plus />
            <Pct>100%</Pct>
          </Status>
        </Win>
      </Stage>
    </>
  );
}
